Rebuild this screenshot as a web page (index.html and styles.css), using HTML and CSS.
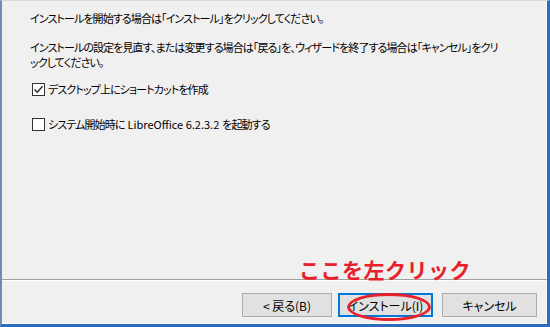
FILE: index.html
```html
<!DOCTYPE html>
<html lang="ja">
<head>
  <meta charset="utf-8">
  <title>インストール</title>
  <link rel="stylesheet" href="styles.css">
</head>
<body>
  <div class="window">
    <div class="content">
      <p class="msg">インストールを開始する場合は「インストール」をクリックしてください。</p>
      <p class="msg last">インストールの設定を見直す、または変更する場合は「戻る」を、ウィザードを終了する場合は「キャンセル」をクリ<br>ックしてください。</p>

      <label class="check first">
        <span class="box">
          <svg width="11" height="11" viewBox="0 0 11 11"><path d="M1.5 5.5 L4.2 8.3 L9.6 2.2" fill="none" stroke="#222" stroke-width="1.3"/></svg>
        </span>
        デスクトップ上にショートカットを作成
      </label>

      <label class="check second">
        <span class="box"></span>
        システム開始時に <span class="latin">LibreOffice 6.2.3.2</span> を起動する
      </label>
    </div>

    <div class="footer">
      <button class="btn back">&lt; 戻る(B)</button>
      <button class="btn install">インストール(I)</button>
      <button class="btn cancel">キャンセル</button>
    </div>

    <div class="note">ここを左クリック</div>
    <div class="ring"></div>
  </div>
</body>
</html>
```

FILE: styles.css
```css
body {
  margin: 0;
  font-family: "Noto Sans CJK JP", "Noto Sans", sans-serif;
  background: #f0f0f0;
}

.window {
  position: relative;
  height: 327px;
  box-sizing: border-box;
  display: flex;
  flex-direction: column;
  background: #f0f0f0;
  border-top: 1px solid #d9d9d9;
  border-left: 2px solid #6f8db0;
  border-right: 3px solid #2b6cc0;
  border-bottom: 3px solid #2b6cc0;
  box-shadow: inset -1px -1px 0 #fff;
}

.content {
  flex: 1;
  padding: 10px 0 0 28px;
  font-size: 11px;
  line-height: 15px;
  letter-spacing: -0.9px;
  font-feature-settings: "palt";
  color: #000;
  white-space: nowrap;
}

.msg {
  margin: 0 0 14px 0;
}

.msg.last {
  margin-bottom: 0;
}

.check {
  display: flex;
  align-items: center;
  height: 16px;
  padding-left: 2px;
}

.check.first {
  margin-top: 11px;
}

.check.second {
  margin-top: 19px;
}

.latin {
  letter-spacing: 0;
  margin: 0 3px;
}

.box {
  width: 11px;
  height: 11px;
  border: 1px solid #333;
  background: #fff;
  margin-right: 3px;
  display: flex;
}

.footer {
  display: flex;
  justify-content: flex-end;
  gap: 6px;
  border-top: 1px solid #a0a0a0;
  box-shadow: inset 0 1px 0 #fff;
  padding: 13px 10px 7px 0;
}

.btn {
  height: 24px;
  width: 95px;
  font-family: inherit;
  font-size: 12px;
  font-feature-settings: "palt";
  color: #000;
  background: #e1e1e1;
  border: 1px solid #adadad;
  padding: 0;
}

.btn.back {
  width: 90px;
}

.btn.install {
  border: 2px solid #0078d7;
  margin-right: 3px;
}

.note {
  position: absolute;
  left: 297px;
  top: 258px;
  font-size: 21px;
  line-height: 21px;
  font-weight: bold;
  letter-spacing: 0.5px;
  color: #e8202a;
}

.ring {
  position: absolute;
  left: 345px;
  top: 292px;
  width: 78px;
  height: 22px;
  border: 3.5px solid #e8202a;
  border-radius: 50%;
}
```
